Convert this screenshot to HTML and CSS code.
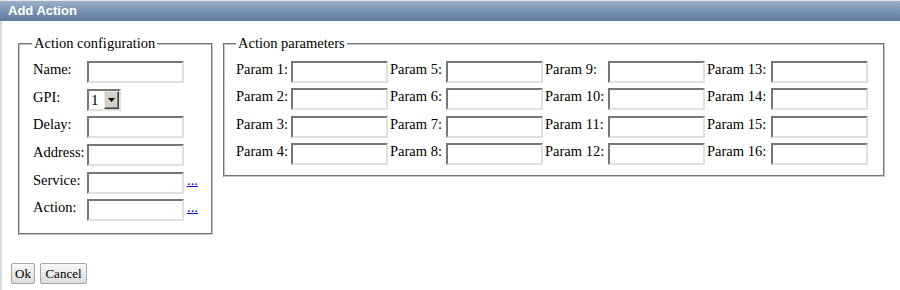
FILE: index.html
```html
<!DOCTYPE html>
<html>
<head>
<meta charset="utf-8">
<title>Add Action</title>
<link rel="stylesheet" href="styles.css">
</head>
<body>
<div class="window">
  <div class="titlebar">Add Action</div>
  <div class="main">
    <div class="panels">
      <fieldset class="fs fs-config">
        <legend>Action configuration</legend>
        <div class="config-grid">
          <span class="lbl">Name:</span><input class="txt" type="text"><span></span>
          <span class="lbl">GPI:</span>
          <span class="select"><span class="select-val">1</span><span class="select-btn"><svg width="7" height="4" viewBox="0 0 7 4"><path d="M0 0h7L3.5 4z" fill="#000"/></svg></span></span><span></span>
          <span class="lbl">Delay:</span><input class="txt" type="text"><span></span>
          <span class="lbl">Address:</span><input class="txt" type="text"><span></span>
          <span class="lbl">Service:</span><input class="txt" type="text"><a class="more" href="#">...</a>
          <span class="lbl">Action:</span><input class="txt" type="text"><a class="more" href="#">...</a>
        </div>
      </fieldset>
      <fieldset class="fs fs-params">
        <legend>Action parameters</legend>
        <div class="params-grid">
          <span class="lbl">Param 1:</span><input class="txt" type="text">
          <span class="lbl">Param 5:</span><input class="txt" type="text">
          <span class="lbl">Param 9:</span><input class="txt" type="text">
          <span class="lbl">Param 13:</span><input class="txt" type="text">
          <span class="lbl">Param 2:</span><input class="txt" type="text">
          <span class="lbl">Param 6:</span><input class="txt" type="text">
          <span class="lbl">Param 10:</span><input class="txt" type="text">
          <span class="lbl">Param 14:</span><input class="txt" type="text">
          <span class="lbl">Param 3:</span><input class="txt" type="text">
          <span class="lbl">Param 7:</span><input class="txt" type="text">
          <span class="lbl">Param 11:</span><input class="txt" type="text">
          <span class="lbl">Param 15:</span><input class="txt" type="text">
          <span class="lbl">Param 4:</span><input class="txt" type="text">
          <span class="lbl">Param 8:</span><input class="txt" type="text">
          <span class="lbl">Param 12:</span><input class="txt" type="text">
          <span class="lbl">Param 16:</span><input class="txt" type="text">
        </div>
      </fieldset>
    </div>
    <div class="buttons">
      <button class="btn btn-ok" type="button">Ok</button>
      <button class="btn btn-cancel" type="button">Cancel</button>
    </div>
  </div>
</div>
</body>
</html>
```

FILE: styles.css
```css
html, body {
  margin: 0;
  padding: 0;
}

body {
  width: 900px;
  height: 290px;
  overflow: hidden;
  background: #fff;
  color: #000;
  font-family: "Liberation Serif", "Times New Roman", serif;
  font-size: 14.5px;
}

.window {
  height: 290px;
  box-sizing: border-box;
  border-top: 1px solid #e6e6e6;
}

.titlebar {
  height: 20px;
  line-height: 20px;
  padding-left: 8px;
  background: linear-gradient(to bottom, #9cb0ca 0%, #8198b7 40%, #5f7a9d 100%);
  color: #fff;
  font-family: "Liberation Sans", Arial, sans-serif;
  font-weight: bold;
  font-size: 13px;
}

.main {
  height: 269px;
  box-sizing: border-box;
  border-left: 2px solid #dadada;
  padding-top: 14px;
}

.panels {
  display: flex;
  align-items: flex-start;
  gap: 10px;
  padding-left: 16px;
}

.fs {
  margin: 0;
  min-width: 0;
  box-sizing: border-box;
  border: 2px groove #c6c6c6;
  padding: 9px 10px 12px 12px;
}

.fs legend {
  padding: 0 2px;
  line-height: 17px;
}

.fs-config {
  width: 195px;
}

.fs-params {
  width: 662px;
  padding-bottom: 10px;
  padding-left: 11px;
}

.config-grid {
  display: grid;
  grid-template-columns: 52px 97px auto;
  column-gap: 2px;
  row-gap: 5.7px;
  margin-left: 1px;
  align-items: start;
}

.params-grid {
  display: grid;
  grid-template-columns: 52px 97px 53px 97px 60px 97px 61px 97px;
  column-gap: 2.5px;
  row-gap: 5.33px;
  align-items: start;
}

.lbl {
  white-space: nowrap;
}

.txt {
  display: block;
  width: 97px;
  height: 22px;
  box-sizing: border-box;
  margin: 0;
  padding: 1px 2px;
  border: 2px solid;
  border-color: #777 #e2e0da #e2e0da #777;
  background: #fff;
  font: inherit;
  outline: none;
}

.select {
  display: flex;
  width: 34px;
  height: 22px;
  box-sizing: border-box;
  border: 2px solid;
  border-color: #777 #e2e0da #e2e0da #777;
  background: #fff;
}

.select-val {
  flex: 1;
  padding-left: 2px;
  line-height: 18px;
  font-size: 15px;
}

.select-btn {
  width: 15px;
  height: 18px;
  box-sizing: border-box;
  display: flex;
  align-items: center;
  justify-content: center;
  background: #d4d0c8;
  border: 1px solid;
  border-color: #eeebe5 #404040 #404040 #eeebe5;
  box-shadow: inset -1px -1px 0 #808080;
}

.more {
  margin-left: 1px;
  color: #0000ee;
  text-decoration: underline;
}

.buttons {
  display: flex;
  gap: 5px;
  padding-left: 9px;
  margin-top: 28px;
}

.btn {
  height: 21px;
  box-sizing: border-box;
  margin: 0;
  padding: 0;
  border: 1px solid #a6a6a6;
  border-radius: 2px;
  background: linear-gradient(to bottom, #f8f8f8, #dcdcdc);
  color: #000;
  font-family: "Liberation Serif", "Times New Roman", serif;
  font-size: 13px;
}

.btn-ok {
  width: 24px;
}

.btn-cancel {
  width: 47px;
}
```
